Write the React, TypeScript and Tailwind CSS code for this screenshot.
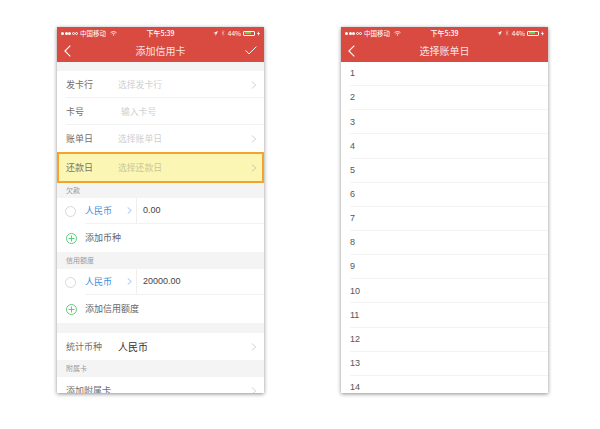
const font = "font-['Noto_Sans_CJK_SC','Noto_Sans',sans-serif]"

function Chevron({ color = '#c7c7cc', size = 8 }: { color?: string; size?: number }) {
    return (
        <svg width={size * 0.7} height={size} viewBox="0 0 7 10" fill="none" className="shrink-0">
            <path d="M1 .6 6 5 1 9.4" stroke={color} strokeWidth="1" />
        </svg>
    )
}

function StatusBar() {
    return (
        <div className="flex h-[12px] items-center justify-between px-[4px] text-[6.500px] leading-none text-white">
            <div className="flex w-[72px] items-center gap-[2px]">
                <span className="flex gap-[0.5px]">
                    {[1, 1, 1, 0, 0].map((on, i) => (
                        <span key={i} className={on ? 'h-[3px] w-[3px] rounded-full bg-white' : 'h-[3px] w-[3px] rounded-full border-[0.5px] border-white'} />
                    ))}
                </span>
                <span>中国移动</span>
                <svg width="7" height="5" viewBox="0 0 14 10" fill="none" className="ml-[2px]">
                    <path d="M1 3.400c3.400-3 8.600-3 12 0M3.400 5.800c2-1.800 5.200-1.800 7.200 0" stroke="#fff" strokeWidth="1.600" />
                    <path d="M5.400 7.800 7 9.600l1.600-1.800c-1-.8-2.200-.8-3.200 0Z" fill="#fff" />
                </svg>
            </div>
            <span className="text-[7px] font-medium">下午5:39</span>
            <div className="flex w-[72px] items-center justify-end gap-[2px]">
                <svg width="5" height="5" viewBox="0 0 10 10"><path d="M10 0 0 4.500h5V10Z" fill="#fff" /></svg>
                <svg width="4" height="6" viewBox="0 0 8 12" fill="none" className="mx-[1px]"><path d="M1 3.500 6.500 8.500 4 11V1l2.500 2.500L1 8.500" stroke="#fff" strokeOpacity=".6" /></svg>
                <span>44%</span>
                <span className="flex h-[5px] w-[12px] rounded-[1px] border-[0.5px] border-white p-[0.5px]">
                    <span className="h-full w-[6px] bg-[#5fd35f]" />
                </span>
                <svg width="3" height="5" viewBox="0 0 6 10"><path d="M3.500 0 0 5.800h2.400L2 10l4-6H3.400Z" fill="#fff" /></svg>
            </div>
        </div>
    )
}

function Header({ title, check }: { title: string; check?: boolean }) {
    return (
        <div className="shrink-0 bg-[#d94a41]">
            <StatusBar />
            <div className="relative flex h-[23px] items-center justify-between px-[7px]">
                <svg width="7" height="12" viewBox="0 0 7 12" fill="none">
                    <path d="M6.300.6.900 6l5.400 5.400" stroke="#fff" strokeWidth="1.100" />
                </svg>
                <span className="absolute inset-x-0 text-center text-[10px] text-[#fbe3e1]">{title}</span>
                {check && (
                    <svg width="12" height="9" viewBox="0 0 12 9" fill="none">
                        <path d="M.6 4.400 4 7.900 11.400.6" stroke="#fff" strokeWidth="1" />
                    </svg>
                )}
            </div>
        </div>
    )
}

function FormRow({ label, hint, value, chevron = true, sep = true, hintCls = '', cls = 'h-[27px]' }: { label: string; hint?: string; value?: string; chevron?: boolean; sep?: boolean; hintCls?: string; cls?: string }) {
    return (
        <div className={`flex shrink-0 items-center bg-white pl-[9px] ${cls}`}>
            <div className={`flex h-full flex-1 items-center pr-[7px] ${sep ? 'border-b border-[#f2f2f2] pt-[1px]' : ''}`}>
                <span className="w-[52px] shrink-0 whitespace-nowrap text-[9px] text-[#6e6e6e]">{label}</span>
                {hint && <span className={`flex-1 text-[8.800px] text-[#cfcfcf] ${hintCls}`}>{hint}</span>}
                {value && <span className="flex-1 text-[10px] text-[#333]">{value}</span>}
                {chevron && <span className="ml-auto"><Chevron /></span>}
            </div>
        </div>
    )
}

function SectionLabel({ text, cls }: { text: string; cls: string }) {
    return <div className={`flex shrink-0 items-center bg-[#f4f4f4] pl-[9px] text-[7px] text-[#9a9a9a] ${cls}`}>{text}</div>
}

function MoneyRow({ amount }: { amount: string }) {
    return (
        <div className="flex h-[26px] shrink-0 items-center bg-white pl-[8px]">
            <span className="h-[11px] w-[11px] shrink-0 rounded-full border border-[#d8d8d8]" />
            <div className="ml-[9px] flex h-full flex-1 items-center border-b border-[#f2f2f2]">
                <span className="w-[42px] pt-[1px] text-[9px] text-[#3d8fe0]">人民币</span>
                <Chevron color="#6aa9e8" size={7} />
                <span className="ml-[4px] h-full w-px bg-[#efefef]" />
                <span className="ml-[6px] pt-[1px] font-['Liberation_Sans',sans-serif] text-[9px] text-[#444]">{amount}</span>
            </div>
        </div>
    )
}

function AddRow({ text, cls }: { text: string; cls: string }) {
    return (
        <div className={`flex shrink-0 items-center bg-white pl-[9px] ${cls}`}>
            <svg width="11" height="11" viewBox="0 0 11 11" fill="none" className="shrink-0">
                <circle cx="5.500" cy="5.500" r="5" stroke="#5ecb7e" />
                <path d="M5.500 2.500v6M2.500 5.500h6" stroke="#5ecb7e" />
            </svg>
            <span className="ml-[8px] text-[9px] text-[#666]">{text}</span>
        </div>
    )
}

function Phone({ children }: { children: React.ReactNode }) {
    return <div className="flex h-[366px] w-[207px] flex-col overflow-hidden bg-white shadow-[0_1px_4px_rgba(0,0,0,0.45)]">{children}</div>
}

export default function App() {
    const days = Array.from({ length: 14 }, (_, i) => i + 1)
    return (
        <div className={`flex h-[429px] w-[600px] gap-[77px] overflow-hidden bg-white pl-[57px] pt-[27px] ${font}`}>
            <Phone>
                <Header title="添加信用卡" check />
                <div className="h-[9px] shrink-0 bg-[#f4f4f4]" />
                <FormRow label="发卡行" hint="选择发卡行" />
                <FormRow label="卡号" hint="输入卡号" hintCls="pl-[3px]" chevron={false} />
                <FormRow label="账单日" hint="选择账单日" sep={false} />
                <div className="flex h-[31px] shrink-0 items-center border-2 border-[#f3a52b] bg-[#fbf6b4] pl-[7px] pr-[5px]">
                    <span className="w-[52px] text-[9px] text-[#76736a]">还款日</span>
                    <span className="flex-1 text-[8.800px] text-[#c9c69b]">选择还款日</span>
                    <Chevron color="#bdbb9d" />
                </div>
                <SectionLabel text="欠款" cls="h-[15px]" />
                <MoneyRow amount="0.00" />
                <AddRow text="添加币种" cls="h-[28px]" />
                <SectionLabel text="信用额度" cls="h-[17px]" />
                <MoneyRow amount="20000.00" />
                <AddRow text="添加信用额度" cls="h-[28px]" />
                <div className="h-[10px] shrink-0 bg-[#f4f4f4]" />
                <FormRow label="统计币种" value="人民币" sep={false} />
                <SectionLabel text="附属卡" cls="h-[17px]" />
                <FormRow label="添加附属卡" sep={false} cls="h-[27px]" />
            </Phone>
            <Phone>
                <Header title="选择账单日" />
                {days.map(d => (
                    <div key={d} className="h-[24.150px] shrink-0 pl-[9px]">
                        <div className="flex h-full items-center border-b border-[#f3f3f3] pt-[1px] font-['Liberation_Sans',sans-serif] text-[9px] text-[#555]">{d}</div>
                    </div>
                ))}
            </Phone>
        </div>
    )
}
